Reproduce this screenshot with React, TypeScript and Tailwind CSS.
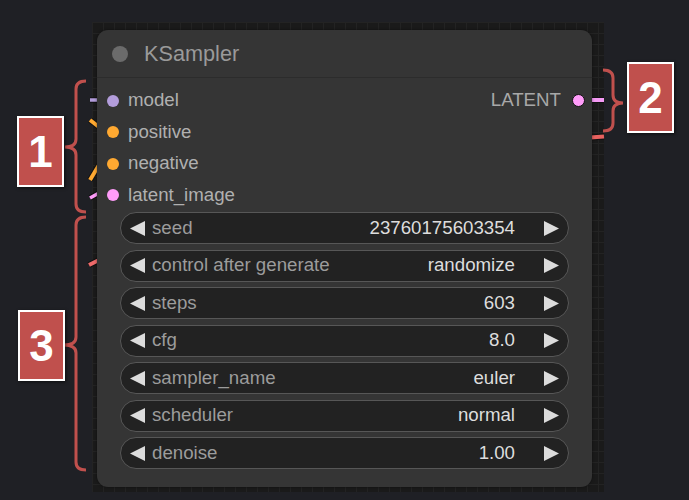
import React from "react";

const FONT = '"Liberation Sans", Arial, sans-serif';

type Input = { name: string; color: string };
const inputs: Input[] = [
  { name: "model", color: "#b39ddb" },
  { name: "positive", color: "#ffa931" },
  { name: "negative", color: "#ffa931" },
  { name: "latent_image", color: "#ff9cf9" },
];

const widgets: [string, string][] = [
  ["seed", "23760175603354"],
  ["control after generate", "randomize"],
  ["steps", "603"],
  ["cfg", "8.0"],
  ["sampler_name", "euler"],
  ["scheduler", "normal"],
  ["denoise", "1.00"],
];

function Arrow({ dir }: { dir: "left" | "right" }) {
  return (
    <svg width="15" height="15" viewBox="0 0 15 15" className="shrink-0">
      {dir === "left" ? (
        <polygon points="15,0 15,15 0,7.5" fill="#dcdcdc" />
      ) : (
        <polygon points="0,0 0,15 15,7.5" fill="#dcdcdc" />
      )}
    </svg>
  );
}

// curly brace: tips at x=tip, vertical spine at x=spine, middle point at x=point
function bracePath(tip: number, spine: number, point: number, y0: number, ym: number, y1: number, r: number) {
  return [
    `M ${tip} ${y0}`,
    `Q ${spine} ${y0} ${spine} ${y0 + r}`,
    `L ${spine} ${ym - r}`,
    `Q ${spine} ${ym} ${point} ${ym}`,
    `Q ${spine} ${ym} ${spine} ${ym + r}`,
    `L ${spine} ${y1 - r}`,
    `Q ${spine} ${y1} ${tip} ${y1}`,
  ].join(" ");
}

function Badge({ n, className }: { n: string; className: string }) {
  return (
    <div
      className={`absolute flex items-center justify-center bg-[#c0504d] border-2 border-white text-white font-bold text-[44px] leading-none shadow-[1px_1px_3px_rgba(0,0,0,0.6)] ${className}`}
      style={{ fontFamily: FONT }}
    >
      {n}
    </div>
  );
}

export default function App() {
  return (
    <div className="relative w-[689px] h-[500px] overflow-hidden bg-[#1f2025]" style={{ fontFamily: FONT }}>
      {/* graph canvas */}
      <div className="absolute left-[92px] top-[22px] w-[512px] h-[470px] bg-[#1a1a1a] bg-[linear-gradient(to_right,#232323_1px,transparent_1px),linear-gradient(to_bottom,#232323_1px,transparent_1px)] bg-[size:11px_11px]" />

      {/* wire stubs entering / leaving the node */}
      <svg className="absolute left-0 top-0" width="689" height="500">
        <g strokeLinecap="butt">
          <line x1="90" y1="100" x2="99" y2="100" stroke="#111" strokeWidth="5.5" />
          <line x1="90" y1="100" x2="99" y2="100" stroke="#b39ddb" strokeWidth="3.5" />
          <line x1="90" y1="120" x2="99" y2="127" stroke="#111" strokeWidth="6" />
          <line x1="90" y1="120" x2="99" y2="127" stroke="#ffa931" strokeWidth="4" />
          <line x1="90" y1="180" x2="99" y2="165" stroke="#111" strokeWidth="6" />
          <line x1="90" y1="180" x2="99" y2="165" stroke="#ffa931" strokeWidth="4" />
          <line x1="90" y1="198" x2="99" y2="193" stroke="#111" strokeWidth="5.5" />
          <line x1="90" y1="198" x2="99" y2="193" stroke="#ff9cf9" strokeWidth="3.5" />
          <line x1="89" y1="265" x2="99" y2="260" stroke="#111" strokeWidth="6" />
          <line x1="89" y1="265" x2="99" y2="260" stroke="#ee6a6a" strokeWidth="4" />
          <line x1="590" y1="100" x2="604" y2="100" stroke="#111" strokeWidth="6" />
          <line x1="590" y1="100" x2="604" y2="100" stroke="#f49af4" strokeWidth="4" />
          <line x1="590" y1="137.5" x2="604" y2="136.5" stroke="#111" strokeWidth="6" />
          <line x1="590" y1="137.5" x2="604" y2="136.5" stroke="#e8625f" strokeWidth="4" />
        </g>
      </svg>

      {/* KSampler node */}
      <div className="absolute left-[97px] top-[30px] w-[495px] h-[457px] rounded-[11px] bg-[#353535] flex flex-col shadow-[0_0_3px_rgba(0,0,0,0.5)]">
        <div className="h-[48px] shrink-0 flex items-center pl-[15px] gap-[16px] border-b border-[#2c2c2c]">
          <div className="w-4 h-4 rounded-full bg-[#6b6b6b]" />
          <span className="text-[21.7px] text-[#9a9a9a] leading-none">KSampler</span>
        </div>

        <div className="flex flex-col pt-[7px]">
          {inputs.map((inp, i) => (
            <div key={inp.name} className="h-[31.5px] flex items-center justify-between">
              <div className="flex items-center pl-[9.5px] gap-[9.5px]">
                <div className="w-3 h-3 rounded-full" style={{ backgroundColor: inp.color }} />
                <span className="text-[18.7px] leading-none text-[#b0b0b0]">{inp.name}</span>
              </div>
              {i === 0 && (
                <div className="flex items-center gap-[11px] pr-[7px]">
                  <span className="text-[18.7px] leading-none text-[#a8a8a8]">LATENT</span>
                  <div className="w-[13px] h-[13px] rounded-full bg-[#ff9cf9] border border-[#111]" />
                </div>
              )}
            </div>
          ))}
        </div>

        <div className="flex flex-col gap-[5.5px] px-[23px] pt-[1px]">
          {widgets.map(([label, value]) => (
            <div
              key={label}
              className="h-[32px] rounded-full border-[1.5px] border-[#575757] bg-[#222222] flex items-center px-[9px]"
            >
              <Arrow dir="left" />
              <span className="ml-[7px] text-[18.7px] leading-none text-[#9c9c9c]">{label}</span>
              <span className="ml-auto text-[18.7px] leading-none text-[#dddddd]">{value}</span>
              <span className="ml-[29px]">
                <Arrow dir="right" />
              </span>
            </div>
          ))}
        </div>
      </div>

      {/* callout braces */}
      <svg className="absolute left-0 top-0" width="689" height="500">
        <g fill="none" stroke="#c0504d" strokeWidth="3">
          <path d={bracePath(86, 76, 65, 81, 147, 212, 8)} />
          <path d={bracePath(86, 76, 64, 217, 345, 470, 8)} />
          <path d={bracePath(603, 613, 623, 70, 103, 131, 8)} />
        </g>
      </svg>

      <Badge n="1" className="left-[17px] top-[116px] w-[47px] h-[71px]" />
      <Badge n="2" className="left-[627px] top-[62px] w-[47px] h-[71px]" />
      <Badge n="3" className="left-[18px] top-[310px] w-[47px] h-[71px]" />
    </div>
  );
}
